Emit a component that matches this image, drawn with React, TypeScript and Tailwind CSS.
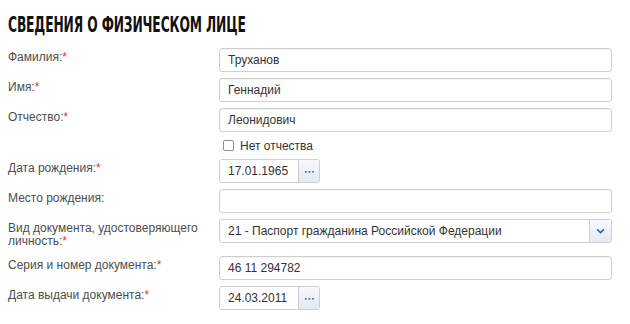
import React from "react";

const Req = () => <span className="text-[#e3342f]">*</span>;

function Label({ children, req }: { children: React.ReactNode; req?: boolean }) {
  return (
    <div className="pt-[3px] text-[12px] leading-[13px] text-[#4d4d4d]">
      {children}
      {req && <Req />}
    </div>
  );
}

function TextInput({ value }: { value?: string }) {
  return (
    <div className="h-[24px] w-[393px] rounded-[3px] border border-[#cfcfcf] bg-white pl-[8px] text-[12px] leading-[22px] text-[#333] shadow-[inset_0_1px_1px_rgba(0,0,0,0.04)]">
      {value}
    </div>
  );
}

function DateInput({ value }: { value: string }) {
  return (
    <div className="flex h-[24px] w-[101px] rounded-[3px] border border-[#cfcfcf] bg-white">
      <div className="w-[78px] pl-[8px] text-[12px] leading-[22px] text-[#333]">{value}</div>
      <div className="flex flex-1 items-center justify-center rounded-r-[3px] border-l border-[#cfcfcf] bg-gradient-to-b from-[#f7f9fc] to-[#e3eaf3]">
        <svg width="9" height="3" viewBox="0 0 9 3">
          <rect x="0" y="1" width="1.6" height="1.6" fill="#2f5f9e" />
          <rect x="3.6" y="1" width="1.6" height="1.6" fill="#2f5f9e" />
          <rect x="7.2" y="1" width="1.6" height="1.6" fill="#2f5f9e" />
        </svg>
      </div>
    </div>
  );
}

function SelectInput({ value }: { value: string }) {
  return (
    <div className="flex h-[24px] w-[393px] rounded-[3px] border border-[#cfcfcf] bg-white">
      <div className="flex-1 pl-[8px] text-[12px] leading-[22px] text-[#333]">{value}</div>
      <div className="flex w-[22px] items-center justify-center rounded-r-[3px] border-l border-[#cfcfcf] bg-gradient-to-b from-[#f7f9fc] to-[#e3eaf3]">
        <svg width="9" height="6" viewBox="0 0 9 6">
          <path d="M1 1.2 L4.5 4.6 L8 1.2" fill="none" stroke="#2f5f9e" strokeWidth="1.6" />
        </svg>
      </div>
    </div>
  );
}

export default function App() {
  return (
    <div className="h-[324px] w-[630px] bg-white" style={{ fontFamily: '"Liberation Sans", Arial, sans-serif' }}>
      <div className="pl-[8px] pt-[12px]">
        <h1
          className="inline-block origin-left scale-x-[0.62] whitespace-nowrap text-[22px] font-bold leading-[26px] tracking-[-0.2px] text-[#111]"
          style={{ fontFamily: '"DejaVu Sans Condensed", "DejaVu Sans", sans-serif', fontStretch: "condensed" }}
        >
          СВЕДЕНИЯ О ФИЗИЧЕСКОМ ЛИЦЕ
        </h1>
      </div>
      <div className="mt-[9px] grid grid-cols-[211px_393px] gap-y-[6px] pl-[8px]">
        <Label req>Фамилия:</Label>
        <TextInput value="Труханов" />
        <Label req>Имя:</Label>
        <TextInput value="Геннадий" />
        <Label req>Отчество:</Label>
        <TextInput value="Леонидович" />
        <div />
        <div className="flex h-[15px] items-center pl-[4px]">
          <div className="h-[11px] w-[11px] rounded-[2px] border border-[#8f8f8f] bg-white" />
          <span className="ml-[6px] text-[12px] leading-[14px] text-[#333]">Нет отчества</span>
        </div>
        <Label req>Дата рождения:</Label>
        <DateInput value="17.01.1965" />
        <Label>Место рождения:</Label>
        <TextInput />
        <div className="h-[31px]">
          <Label req>
            Вид документа, удостоверяющего
            <br />
            личность:
          </Label>
        </div>
        <SelectInput value="21 - Паспорт гражданина Российской Федерации" />
        <Label req>Серия и номер документа:</Label>
        <TextInput value="46 11 294782" />
        <Label req>Дата выдачи документа:</Label>
        <DateInput value="24.03.2011" />
      </div>
    </div>
  );
}
